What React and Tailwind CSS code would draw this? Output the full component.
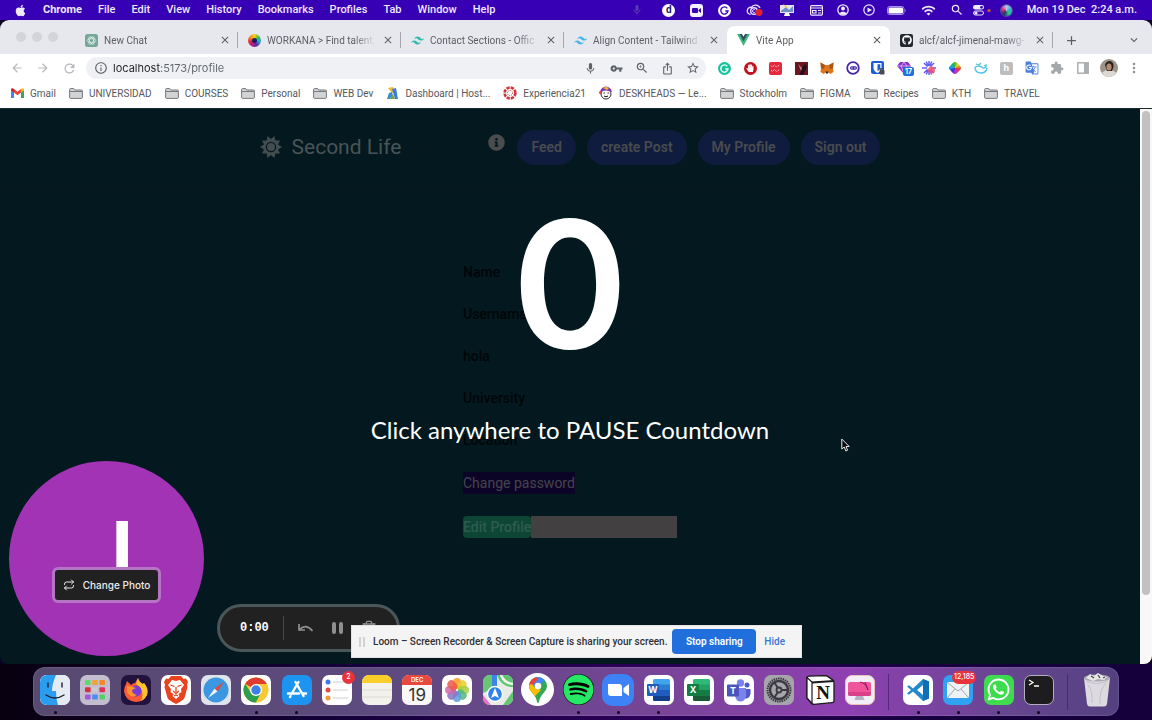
import React from "react";
import { FaApple, FaSpotify, FaWhatsapp, FaGithub, FaInfoCircle, FaHandPaper } from "react-icons/fa";
import { SiTailwindcss } from "react-icons/si";
import {
  MdMic, MdVpnKey, MdZoomIn, MdStarBorder, MdExtension, MdInfoOutline, MdRefresh, MdArrowBack,
  MdArrowForward, MdIosShare, MdClose, MdAdd, MdMoreVert, MdExpandMore, MdGTranslate, MdWifi, MdSearch,
} from "react-icons/md";
import { Repeat, Trash2 } from "lucide-react";

const menus = ["File", "Edit", "View", "History", "Bookmarks", "Profiles", "Tab", "Window", "Help"];

function MenuBar() {
  return (
    <header className="flex h-5 items-center justify-between bg-[#3700b4] font-[Roboto,sans-serif] text-[11px] text-[#efe8ff]">
      <nav className="flex items-center gap-4 pl-[14px]" aria-label="Menu bar">
        <button aria-label="Apple menu"><FaApple size={13} /></button>
        <button className="font-bold">Chrome</button>
        {menus.map((m) => <button key={m} className="font-medium">{m}</button>)}
      </nav>
      <div className="flex items-center pr-[15px]">
        <span className="flex w-8 justify-center text-[#5b3bb0]"><MdMic size={12} /></span>
        <span className="flex w-8 justify-center">
          <b className="flex size-[13px] items-center justify-center rounded-full bg-white text-[10px] leading-none text-[#24106e]">d</b>
        </span>
        <span className="flex w-6 justify-center">
          <svg width="13" height="13" viewBox="0 0 13 13"><rect width="13" height="13" rx="3" fill="#f4f0ff" /><rect x="2" y="4" width="6" height="5" rx="1" fill="#3700b4" /><path d="M8.500 6l2.500-2v5L8.500 7z" fill="#3700b4" /></svg>
        </span>
        <span className="flex w-8 justify-center"><Grammarly bg="#fff" fg="#3700b4" /></span>
        <span className="flex w-7 justify-center">
          <svg width="18" height="14" viewBox="0 0 18 14" fill="none" stroke="#e9ddff" strokeWidth="1.400"><path d="M4.500 11.500a3.600 3.600 0 1 1 .8-7.200A5 5 0 0 1 14 5" /><circle cx="8" cy="8" r="3.300" /><path d="M9.300 7.300a1.500 1.500 0 1 0 0 1.500" strokeWidth="1" /><circle cx="13" cy="9.500" r="3.500" fill="#e0202c" stroke="none" /></svg>
        </span>
        <span className="flex w-9 justify-center">
          <svg width="16" height="14" viewBox="0 0 16 14"><rect x="1" y="2" width="14" height="8" fill="#e6e2f2" /><path d="M2 8l5-4 3 3 4-4v6H2z" fill="#6a8fc8" /><path d="M4 1l5 3-2 1z" fill="#e7cf4a" /><path d="M6 10h4l1 3H5z" fill="#fff" /></svg>
        </span>
        <span className="flex w-6 justify-center">
          <svg width="13" height="11" viewBox="0 0 13 11" fill="none" stroke="#efe8ff" strokeWidth="1.200"><rect x=".6" y=".6" width="11.800" height="9.500" rx="1" /><path d="M1 3h11M2.500 5.500h3.500v2.500H2.500zM8 5.500h3M8 8h3" /></svg>
        </span>
        <span className="flex w-7 justify-center">
          <svg width="12" height="12" viewBox="0 0 12 12"><circle cx="6" cy="6" r="5.200" fill="none" stroke="#efe8ff" strokeWidth="1.300" /><circle cx="6" cy="4.600" r="2" fill="#efe8ff" /><path d="M2.500 9.500c1-2.500 6-2.500 7 0-2 1.800-5 1.800-7 0z" fill="#efe8ff" /></svg>
        </span>
        <span className="flex w-6 justify-center">
          <svg width="12" height="12" viewBox="0 0 12 12"><circle cx="6" cy="6" r="5.200" fill="none" stroke="#efe8ff" strokeWidth="1.200" /><path d="M4.500 3.500L9 6 4.500 8.500z" fill="#efe8ff" /></svg>
        </span>
        <span className="flex w-8 justify-center">
          <svg width="20" height="9" viewBox="0 0 20 9"><rect x=".5" y=".5" width="16.500" height="8" rx="2.200" fill="none" stroke="#a994e8" /><rect x="1.500" y="1.500" width="14.500" height="6" rx="1.300" fill="#fff" /><path d="M18 3v3q1.500-1.500 0-3z" fill="#a994e8" /></svg>
        </span>
        <span className="flex w-8 justify-center"><MdWifi size={15} /></span>
        <span className="flex w-6 justify-center"><MdSearch size={14} /></span>
        <span className="flex w-6 justify-center">
          <svg width="20" height="11" viewBox="0 0 20 11"><rect x="2" width="11" height="4.600" rx="2.300" fill="#efe8ff" /><circle cx="10.500" cy="2.300" r="1.400" fill="#3700b4" /><rect x="2.500" y="6" width="10" height="4" rx="2" fill="none" stroke="#efe8ff" /><circle cx="5" cy="8" r="1.600" fill="#efe8ff" /><circle cx="18" cy="5.500" r="1.600" fill="#e0562a" /></svg>
        </span>
        <span className="flex w-7 justify-center">
          <span className="size-[11px] rounded-full bg-[conic-gradient(#b9c6e8,#3fb0d8,#2ec08a,#253070,#d83c7a,#b9c6e8)] ring-1 ring-[#58459c]" />
        </span>
        <time className="pl-[6px] font-medium whitespace-pre">Mon 19 Dec  2:24 a.m.</time>
      </div>
    </header>
  );
}

function Grammarly({ bg, fg }) {
  return (
    <svg width="13" height="13" viewBox="0 0 13 13"><circle cx="6.500" cy="6.500" r="6.500" fill={bg} /><path d="M9.300 4.300A3.600 3.600 0 1 0 10 7H7.300" fill="none" stroke={fg} strokeWidth="1.400" /></svg>
  );
}

const tabs = [
  { t: "New Chat", icon: <svg width="13" height="13" viewBox="0 0 13 13"><rect width="13" height="13" rx="2.500" fill="#74a898" /><g fill="none" stroke="#dcebe6" strokeWidth=".8"><ellipse cx="6.500" cy="6.500" rx="4.200" ry="2" /><ellipse cx="6.500" cy="6.500" rx="4.200" ry="2" transform="rotate(60 6.500 6.500)" /><ellipse cx="6.500" cy="6.500" rx="4.200" ry="2" transform="rotate(120 6.500 6.500)" /></g></svg> },
  { t: "WORKANA > Find talent,", icon: <span className="flex size-[13px] items-center justify-center rounded-full bg-[conic-gradient(#f5d020,#35c04a,#2aa5e0,#5b2a9c,#b0208c,#e02a3c,#f58a1f,#f5d020)]"><span className="size-[5px] rounded-full bg-[#221a5c]" /></span> },
  { t: "Contact Sections - Offic", icon: <SiTailwindcss size={13} color="#2fb9ac" /> },
  { t: "Align Content - Tailwind", icon: <SiTailwindcss size={13} color="#46b4ea" /> },
  { t: "Vite App", active: true, icon: <svg width="13" height="12" viewBox="0 0 13 12"><path d="M0 0h13L6.500 12z" fill="#41b883" /><path d="M2.600 0h7.800L6.500 7.200z" fill="#35495e" /><path d="M4.900 0h3.200L6.500 2.800z" fill="#fff" /></svg> },
  { t: "alcf/alcf-jimenal-mawg-", icon: <span className="flex size-[13px] items-center justify-center rounded-[2px] bg-[#24292e] text-white"><FaGithub size={10} /></span> },
];

function TabStrip() {
  return (
    <div className="flex h-[34px] items-end rounded-t-[9px] bg-[#e7e8ee] font-[Roboto,sans-serif] text-[#5b5e63]">
      <div className="flex h-full w-[75px] shrink-0 items-center gap-[6px] pl-4">
        {["Close window", "Minimize", "Zoom"].map((l) => <button key={l} aria-label={l} className="size-[10px] rounded-full bg-[#d3d4d8]" />)}
      </div>
      <div className="flex min-w-0 flex-1">
        {tabs.map((b, i) => (
          <div key={b.t} className={"flex h-7 max-w-[163px] min-w-0 flex-1 items-center " + (b.active ? "rounded-t-lg bg-white" : "")}>
            <button className="flex min-w-0 flex-1 items-center gap-[6px] pl-[10px] text-[10px]">
              <span className="shrink-0">{b.icon}</span>
              <span className="flex-1 overflow-hidden text-left whitespace-nowrap [mask-image:linear-gradient(to_right,#000_80%,transparent)]">{b.t}</span>
            </button>
            <button aria-label={"Close " + b.t} className="mx-1 flex w-4 justify-center"><MdClose size={12} /></button>
            <span className={"h-4 w-px " + (i === 4 || i === 3 ? "bg-transparent" : "bg-[#a5a7ad]")} />
          </div>
        ))}
        <button aria-label="New tab" className="flex h-7 w-9 items-center justify-center"><MdAdd size={15} /></button>
      </div>
      <button aria-label="Search tabs" className="flex h-7 w-9 items-center justify-center"><MdExpandMore size={14} /></button>
    </div>
  );
}

const extensions = [
  ["Grammarly", <Grammarly bg="#15c39a" fg="#fff" />],
  ["AdBlock", <span className="flex size-[13px] items-center justify-center rounded-full bg-[#c4101f] text-white"><FaHandPaper size={8} /></span>],
  ["Checklist", <svg width="13" height="13" viewBox="0 0 13 13"><rect width="13" height="13" rx="2" fill="#e5293e" /><path d="M2 3.500l1.500 1.500 2-2 2 2 3-2M2 8l1.500 1.500 2-2 2 2 3-2" fill="none" stroke="#ffc5c8" strokeDasharray="2 1" /></svg>],
  ["Reader", <svg width="13" height="13" viewBox="0 0 13 13"><rect width="13" height="13" fill="#6b1720" /><path d="M2 2l5 4 3-4 2 3-4 8H5l1-5z" fill="#23101a" /><path d="M3 2l4 4-1 3z" fill="#c78088" /></svg>],
  ["MetaMask", <svg width="14" height="13" viewBox="0 0 14 13"><path d="M.5.500L5 3h4L13.500.500 13 6l.5 4-3 2-2-1.500h-3L3.500 12l-3-2L1 6z" fill="#e2761b" /><path d="M.5.500L5 3l-1 4-3-.5zM13.500.500L9 3l1 4 3-.5z" fill="#a8541a" /><path d="M5.500 9.500h3l-.5 2H6z" fill="#3a2a2a" /></svg>],
  ["Chat", <svg width="14" height="14" viewBox="0 0 14 14"><circle cx="7" cy="7" r="5.800" fill="#fff" stroke="#4326a8" strokeWidth="1.800" /><rect x="4" y="5.300" width="7" height="3.400" rx="1.700" fill="#4326a8" /><circle cx="6" cy="7" r=".7" fill="#fff" /><circle cx="9" cy="7" r=".7" fill="#fff" /></svg>],
  ["Bitwarden", <svg width="14" height="14" viewBox="0 0 14 14"><rect width="13" height="13" rx="2" fill="#175ddc" /><path d="M2.500 2h8v5q0 3-4 5-4-2-4-5z" fill="#fff" /><path d="M6.500 3.200h2.800v4q0 1.500-2.800 3z" fill="#175ddc" /><rect x="8.500" y="9" width="5" height="4.500" rx=".8" fill="#4b4b4b" /><path d="M9.500 9V7.500h3V9" fill="none" stroke="#4b4b4b" /></svg>],
  ["Gem", <span className="relative flex"><svg width="14" height="12" viewBox="0 0 14 12"><path d="M3 0h8l3 4-7 8-7-8z" fill="#8a32c8" /><path d="M0 4h14M4 4l3 7 3-7-3-4z" fill="none" stroke="#e3c2f6" strokeWidth=".8" /></svg><span className="absolute top-[5px] left-[6px] rounded-[2px] bg-[#1a73d8] px-[2px] text-[7px] leading-[9px] font-bold text-white">17</span></span>],
  ["Loom", <svg width="14" height="14" viewBox="0 0 14 14"><g stroke="#625df5" strokeWidth="1.500"><path d="M7 0v14M0 7h14M2 2l10 10M12 2L2 12M4.300.500l5.400 13M9.700.500l-5.400 13" /></g><circle cx="7" cy="7" r="2" fill="#fff" /><circle cx="9.500" cy="9" r="3.500" fill="#f0506e" opacity=".85" /></svg>],
  ["Color picker", <span className="size-[10px] rotate-45 rounded-[3px] bg-[conic-gradient(#e8d820,#e83030,#d030c8,#3030e0,#18a8e0,#20b838,#e8d820)]" />],
  ["Whale", <svg width="14" height="14" viewBox="0 0 14 14" fill="none" stroke="#4cc1e8" strokeWidth="1.300"><path d="M1 6q5-2 8 1 4 0 3-3l-2 1M1 6q0 6 6 6 5 0 6-5M2 3l3 1 2-2" /></svg>],
  ["Honey", <span className="flex size-[13px] items-center justify-center rounded-[2px] bg-[#bdbdbd] text-[9px] font-bold text-white">h</span>],
  ["Translate", <MdGTranslate size={14} color="#4a80dc" />],
  ["Extensions", <MdExtension size={14} color="#a5a8ab" />],
  ["Side panel", <svg width="12" height="12" viewBox="0 0 12 12"><rect x=".8" y=".8" width="10.400" height="10.400" fill="none" stroke="#adb0b3" strokeWidth="1.500" /><path d="M7 1h4v10H7z" fill="#adb0b3" /></svg>],
  ["Account", <svg width="18" height="18" viewBox="0 0 18 18"><circle cx="9" cy="9" r="9" fill="#9c9389" /><path d="M2 14q2-3 7-3t7 3q-3 4-7 4t-7-4z" fill="#ddd8d4" /><path d="M5 6q1-4 5-4 4 1 3.500 6L12 12H7z" fill="#2a211d" /><ellipse cx="9" cy="8" rx="2.600" ry="3.500" fill="#b58a73" /></svg>],
  ["More", <MdMoreVert size={16} color="#909397" />],
];

function Toolbar() {
  return (
    <div className="flex h-7 items-center bg-white text-[#5f6368]">
      <div className="grid w-[82px] grid-cols-3 justify-items-center pl-1 text-[#b7b9bc]">
        <button aria-label="Back"><MdArrowBack size={14} /></button>
        <button aria-label="Forward"><MdArrowForward size={14} /></button>
        <button aria-label="Reload"><MdRefresh size={15} /></button>
      </div>
      <form className="ml-1 flex h-[22px] min-w-0 flex-1 items-center rounded-full bg-[#f0f1f5] pl-2">
        <MdInfoOutline size={14} className="shrink-0" />
        <input aria-label="Address" defaultValue="localhost:5173/profile" className="ml-[5px] w-0 min-w-0 flex-1 bg-[linear-gradient(to_right,#202124_48px,#5f6368_48px)] bg-clip-text text-[11px] text-transparent outline-none" />
        <div className="grid w-32 grid-cols-5 justify-items-center">
          <button type="button" aria-label="Voice search"><MdMic size={13} /></button>
          <button type="button" aria-label="Passwords"><MdVpnKey size={13} /></button>
          <button type="button" aria-label="Zoom"><MdZoomIn size={14} /></button>
          <button type="button" aria-label="Share"><MdIosShare size={13} /></button>
          <button type="button" aria-label="Bookmark"><MdStarBorder size={14} /></button>
        </div>
      </form>
      <div className="ml-[6px] grid w-[440px] grid-cols-17 items-center justify-items-center pr-[5px]">
        {extensions.map(([n, icon]) => <button key={n} aria-label={n} className="flex">{icon}</button>)}
      </div>
    </div>
  );
}

const Folder = () => (
  <svg width="14" height="11" viewBox="0 0 14 11"><path d="M.6 1.600q0-1 1-1h3.200l1.200 1.400h6.400q1 0 1 1V9.400q0 1-1 1H1.600q-1 0-1-1z" fill="#d2d3d5" stroke="#77797c" /><path d="M1 3.500h12" stroke="#77797c" /></svg>
);
const Gmail = () => (
  <svg width="13" height="10" viewBox="0 0 13 10"><path d="M0 1.500V10h3V4z" fill="#4285f4" /><path d="M13 1.500V10h-3V4z" fill="#34a853" /><path d="M3 1l3.500 2.800L10 1v3.500L6.500 7.300 3 4.500z" fill="#ea4335" /><path d="M0 1.500Q.5-.8 3 1v3.500L0 2.500z" fill="#c5221f" /><path d="M13 1.500Q12.500-.8 10 1v3.500l3-2z" fill="#fbbc04" /></svg>
);
const bookmarks = [
  ["Gmail", <Gmail />], ["UNIVERSIDAD"], ["COURSES"], ["Personal"], ["WEB Dev"],
  ["Dashboard | Host...", <svg width="13" height="13" viewBox="0 0 13 13"><path d="M2 1l5-1 2 5-3 1z" fill="#f3b52c" /><path d="M6 2l4-1 2 11H9z" fill="#3b7dd8" /><path d="M1 12l2-6 3-1 1 4-3 3z" fill="#3b8bd0" /><path d="M4 12l3-5 2 5z" fill="#79a63d" /></svg>],
  ["Experiencia21", <svg width="14" height="14" viewBox="0 0 14 14"><circle cx="7" cy="7" r="5.400" fill="none" stroke="#d0343a" strokeWidth="2.600" strokeDasharray="3.240 1" /><circle cx="7" cy="7" r="2.600" fill="none" stroke="#d0343a" strokeDasharray="1 1.040" /></svg>],
  ["DESKHEADS — Le...", <svg width="14" height="14" viewBox="0 0 14 14"><circle cx="7" cy="8" r="5" fill="#fff" stroke="#332a2a" /><path d="M1 6q1-5 6-5.500Q12 1 13 6 7 3 1 6z" fill="#7b38b4" /><path d="M4 2q3-2 6 0L8 4z" fill="#f0b52a" /><path d="M4.500 7h1.500M8.500 7H10M5 10q2 1.500 4 0" stroke="#222" /><circle cx="1.500" cy="6.500" r="1.500" fill="#e33a44" /></svg>],
  ["Stockholm"], ["FIGMA"], ["Recipes"], ["KTH"], ["TRAVEL"],
];

function Bookmarks() {
  return (
    <nav aria-label="Bookmarks" className="flex h-[26px] items-center gap-[13px] overflow-hidden bg-white pb-1 pl-[11px] font-[Roboto,sans-serif] text-[10px] text-[#55585c]">
      {bookmarks.map(([n, icon]) => (
        <a key={n} href="#" className="flex shrink-0 items-center gap-[6px] whitespace-nowrap">{icon || <Folder />}{n}</a>
      ))}
    </nav>
  );
}

function SunIcon() {
  return (
    <svg width="22" height="22" viewBox="0 0 22 22"><path d="M11 3l3.500-3 .8 4.600L20 4.500 18 8.600l4 2.400-4 2.400 2 4.100-4.700-.1-.8 4.600L11 19l-3.500 3-.8-4.600L2 17.500l2-4.100L0 11l4-2.400-2-4.100 4.700.1L7.500 0z" fill="#434d50" /><circle cx="11" cy="11" r="4.600" fill="none" stroke="#07191e" strokeWidth="1.300" /></svg>
  );
}

function ProfilePage() {
  return (
    <div className="font-[Roboto,sans-serif] text-sm">
      <div className="flex h-[77px] items-center justify-center border-b border-[#03161b]">
        <SunIcon />
        <h1 className="ml-[10px] text-[21px] text-[#4a5456]">Second Life</h1>
        <FaInfoCircle size={17} className="mr-3 mb-[10px] ml-[87px] text-[#4b4c4d]" />
        <div className="flex gap-[11px] font-semibold text-[#484b4f]">
          {["Feed", "create Post", "My Profile", "Sign out"].map((l) => (
            <button key={l} className="h-[35px] rounded-full bg-[#101c3d] px-[14px] whitespace-nowrap">{l}</button>
          ))}
        </div>
      </div>
      <div className="mx-auto mt-[76px] flex w-[214px] flex-col items-start gap-[22px] font-medium text-[#000608]">
        {["Name", "Username", "hola", "University", "Location"].map((l) => <p key={l} className="leading-5">{l}</p>)}
        <button className="bg-[#0c0426] leading-[22px] font-normal text-[#45444f]">Change password</button>
        <div className="flex w-full">
          <button className="shrink-0 rounded bg-[#0d4635] leading-[22px] text-[#2f5b4f]">Edit Profile</button>
          <input aria-label="Profile value" className="h-[22px] min-w-0 flex-1 bg-[#424041]" />
        </div>
      </div>
    </div>
  );
}

function Recorder() {
  return (
    <>
      <div className="absolute bottom-2 left-[9px] flex size-[195px] items-center justify-center rounded-full bg-[#a233b5]">
        <span className="text-[104px] leading-none font-medium text-white">J</span>
        <button className="absolute top-[106px] flex h-9 items-center gap-2 rounded-md border-[3px] border-[#b674c4] bg-[#212121] px-2 text-[10px] font-medium whitespace-nowrap text-[#ececec]">
          <Repeat size={12} />Change Photo
        </button>
      </div>
      <div className="absolute bottom-3 left-[217px] flex h-12 w-[183px] items-center rounded-full border-[3px] border-[#4b5658] bg-[#212121] pl-5 text-[#8f8f91]">
        <span className="font-['Liberation_Mono',monospace] text-xs font-bold text-white">0:00</span>
        <span className="mx-[14px] h-6 w-px bg-[#48484a]" />
        <button aria-label="Restart" className="mr-[18px]"><svg width="16" height="11" viewBox="0 0 16 11" fill="none" stroke="currentColor" strokeWidth="1.700"><path d="M1 1v6h6M1.500 6.500Q8 0 14.500 8" /></svg></button>
        <button aria-label="Pause" className="mr-[18px] flex gap-[3px]"><span className="h-3 w-1 rounded-sm bg-[#8f8f91]" /><span className="h-3 w-1 rounded-sm bg-[#8f8f91]" /></button>
        <button aria-label="Delete"><Trash2 size={16} /></button>
      </div>
      <div className="absolute bottom-[6px] left-[351px] flex h-[33px] w-[451px] items-center border border-[#e3e3e3] bg-[#f4f4f5] pr-2 pl-[7px] font-[Roboto,sans-serif] text-[10px] text-[#303134]">
        <span className="mr-2 flex gap-[2px]"><span className="h-[10px] w-[2px] bg-[#d2d2d4]" /><span className="h-[10px] w-[2px] bg-[#d2d2d4]" /></span>
        <p className="flex-1 font-medium whitespace-nowrap">Loom – Screen Recorder &amp; Screen Capture is sharing your screen.</p>
        <button className="h-[25px] w-[84px] rounded bg-[#206fdc] font-semibold text-white">Stop sharing</button>
        <button className="mx-2 font-medium text-[#3a76d2]">Hide</button>
      </div>
    </>
  );
}

const Tile = ({ className = "bg-white", children }) => (
  <span className={"flex size-[30px] items-center justify-center overflow-hidden rounded-[7px] " + className}>{children}</span>
);
const Office = ({ l, a, b, c, d }) => (
  <Tile><svg width="24" height="22" viewBox="0 0 24 22"><rect x="6" width="17" height="22" rx="1.500" fill={a} /><path d="M6 5.500h17V11H6z" fill={b} /><path d="M6 11h17v5.500H6z" fill={c} /><path d="M6 16.500h17v4q0 1.500-1.500 1.500h-14Q6 22 6 20.500z" fill={d} /><rect y="5" width="12" height="12" rx="1" fill={c} /><text x="6" y="14" fontSize="9" fontWeight="700" textAnchor="middle" fill="#fff">{l}</text></svg></Tile>
);
const petals = [["#f59a23", 0], ["#e8cf2c", 45], ["#a5cf3c", 90], ["#50b878", 135], ["#5a9fd8", 180], ["#8a72c8", 225], ["#d06aa8", 270], ["#ee5a48", 315]];

const apps = [
  { n: "Finder", run: true, icon: <Tile><svg width="30" height="30" viewBox="0 0 30 30"><path d="M0 0h30v30H0z" fill="#e4ebf3" /><path d="M0 0h16q-4 9-4 16h4q0 8 2 14H0z" fill="#2b9df0" /><path d="M8 8v4M22 8v4M6 20q9 6 18 0" stroke="#223" strokeWidth="1.400" fill="none" strokeLinecap="round" /></svg></Tile> },
  { n: "Launchpad", icon: <Tile className="bg-[#c3bdd0]"><svg width="20" height="20" viewBox="0 0 20 20">{["#62d86a", "#f5a13a", "#f08a28", "#d8303e", "#c9c9cf", "#e02f58", "#a356e0", "#4a8cf0", "#52cf68"].map((c, i) => <rect key={i} x={(i % 3) * 7.200} y={Math.floor(i / 3) * 7.200} width="5.600" height="5" rx="1" fill={c} />)}</svg></Tile> },
  { n: "Firefox", icon: <Tile className="bg-[#21123f]"><svg width="26" height="26" viewBox="0 0 26 26"><path d="M3 7l1-3 4 4q2-2 4-2l3-5q1 4 5 6l1-1q5 6 3 12-3 7-11 7Q2 24 1 14q0-4 2-7z" fill="#fb5a35" /><path d="M15 1q1 4 5 6l1-1q5 6 3 12-2 4-6 6 3-6 0-12-1-3-5-5z" fill="#fdc32e" /><circle cx="13" cy="14" r="5.500" fill="#7a3bd6" /><path d="M4 9q4 0 6 1l3 1-4 2q0 4 5 5-6 4-10-3z" fill="#ff9330" /></svg></Tile> },
  { n: "Brave", icon: <Tile><svg width="26" height="28" viewBox="0 0 26 28"><path d="M8 0h10l2.500 3L23 2.500 25 6l-1 3 .5 2-3 11q-1 2-8.500 6-7.500-4-8.500-6l-3-11L2 9 1 6l2-3.500L5.500 3z" fill="#e8431f" /><path d="M13 5l4-1 4 5-3 4 .5 3-3 2 1 2-3.500 3-3.500-3 1-2-3-2 .5-3-3-4 4-5z" fill="#fff" /><path d="M7.500 9l4 1.500M18.500 9l-4 1.500M13 11v5M10 15l3 2.500L16 15M11 20l2-1 2 1" stroke="#e8431f" strokeWidth="1.300" fill="none" /></svg></Tile> },
  { n: "Safari", icon: <Tile className="bg-[#dfe3ea]"><svg width="26" height="26" viewBox="0 0 26 26"><circle cx="13" cy="13" r="12.500" fill="#3a97e0" /><path d="M21 5l-6.500 9.500-3-3z" fill="#e3473d" /><path d="M5 21l6.500-9.500 3 3z" fill="#eef2f5" /></svg></Tile> },
  { n: "Chrome", run: true, icon: <Tile><svg width="26" height="26" viewBox="0 0 26 26"><circle cx="13" cy="13" r="12.500" fill="#f8c934" /><path d="M13 13L2.200 6.700A12.500 12.500 0 0 1 23.800 6.700z" fill="#df3b30" /><path d="M2.200 6.700A12.500 12.500 0 0 0 13 25.500L18 16 8 16z" fill="#2f9e4e" /><path d="M13 7h10.900q3 6.500-.5 12-4 6.500-10.400 6.500L18 16z" fill="#f8c934" /><circle cx="13" cy="13" r="6" fill="#fff" /><circle cx="13" cy="13" r="4.700" fill="#3c7eea" /></svg></Tile> },
  { n: "App Store", run: true, icon: <Tile className="bg-[#1d94ef] text-white"><svg width="24" height="24" viewBox="0 0 24 24" stroke="#fff" strokeWidth="2.400" strokeLinecap="round"><path d="M13.500 4L6.500 16M10.500 4l8 14M3 15.500h11M18 15.500h3M5 19l.5-.8" /></svg></Tile> },
  { n: "Reminders", badge: "2", icon: <Tile><svg width="30" height="30" viewBox="0 0 30 30"><circle cx="6" cy="7" r="2.500" fill="#3d78e8" /><circle cx="6" cy="15" r="2.500" fill="#e04b40" /><circle cx="6" cy="23" r="2.500" fill="#f09a37" /><path d="M11 7h15M11 15h15M11 23h15" stroke="#cfcfd2" /></svg></Tile> },
  { n: "Notes", icon: <Tile className="bg-[#f3f1ec]"><svg width="30" height="30" viewBox="0 0 30 30"><path d="M0 0h30v8H0z" fill="#f9ce2b" /><path d="M0 15h30M0 22h30" stroke="#dedbd4" /></svg></Tile> },
  { n: "Calendar", icon: <Tile className="flex-col bg-[#faf8f6]"><span className="w-full bg-[#e8483f] text-center text-[6px] leading-[10px] font-semibold text-white">DEC</span><span className="text-[17px] leading-5 text-[#333]">19</span></Tile> },
  { n: "Photos", icon: <Tile><svg width="26" height="26" viewBox="0 0 26 26">{petals.map(([c, r]) => <rect key={r} x="9" y="1" width="8" height="11" rx="4" fill={c} opacity=".85" transform={`rotate(${r} 13 13)`} />)}</svg></Tile> },
  { n: "Maps", icon: <Tile className="bg-[#e8ebe5]"><svg width="30" height="30" viewBox="0 0 30 30"><path d="M0 0h10v14L0 18z" fill="#67c775" /><path d="M14 0h16v12Q18 12 14 0z" fill="#5cc66c" /><path d="M18 0q3 8 12 9" stroke="#f2f4f2" strokeWidth="2.500" fill="none" /><path d="M20 30l10-14v14z" fill="#63c673" /><path d="M0 20l8 10H0z" fill="#e673c6" /><path d="M9 0h5v14H9z" fill="#3a86ea" /><circle cx="12" cy="19" r="7.500" fill="#2f83ea" stroke="#fff" strokeWidth="1.300" /><path d="M12 13l4 10-4-2-4 2z" fill="#fff" /></svg></Tile> },
  { n: "Google Maps", icon: <span className="flex size-[33px] items-center justify-center rounded-full bg-white"><svg width="18" height="26" viewBox="0 0 18 26"><defs><clipPath id="pin"><path d="M9 0a9 9 0 0 1 9 9c0 6-7 8-8 16q-1 2-2 0C7 17 0 15 0 9a9 9 0 0 1 9-9z" /></clipPath></defs><g clipPath="url(#pin)"><path d="M0 0h18v26H0z" fill="#34a853" /><path d="M0 4l7 6 11-8V0H0z" fill="#4285f4" /><path d="M0 3l6-5 3 4-8 9z" fill="#ea4335" /><path d="M0 8l3-1 3 4 6 2-8 8H0z" fill="#fbbc04" /></g><circle cx="9" cy="9" r="3.300" fill="#fff" /></svg></span> },
  { n: "Spotify", run: true, icon: <span className="flex rounded-full bg-black text-[#25e865]"><FaSpotify size={31} /></span> },
  { n: "Zoom", run: true, icon: <span className="flex size-8 items-center justify-center rounded-[10px] bg-[#3d82f6]"><svg width="21" height="12" viewBox="0 0 21 12" fill="#fff"><path d="M0 0h11q3 0 3 3v9H3q-3 0-3-3zM15.500 4L21 0v12l-5.500-4z" /></svg></span> },
  { n: "Word", run: true, icon: <Office l="W" a="#41a5ee" b="#2b7cd3" c="#1f5cbd" d="#123f8c" /> },
  { n: "Excel", icon: <Office l="X" a="#2fb878" b="#23a063" c="#137c42" d="#185c37" /> },
  { n: "Teams", icon: <Tile><svg width="24" height="24" viewBox="0 0 24 24"><circle cx="20" cy="7" r="2.500" fill="#5059c9" /><path d="M17 11h6.500v5q-1 4-4 4.500H17z" fill="#5059c9" /><circle cx="13.500" cy="5" r="3.700" fill="#7b83eb" /><path d="M8 10h11v8q-1 5.500-5.500 5.500T8 18z" fill="#7b83eb" /><rect y="6.500" width="12" height="12" rx="1" fill="#4b53bc" /><text x="6" y="16" fontSize="9" fontWeight="700" textAnchor="middle" fill="#fff">T</text></svg></Tile> },
  { n: "System Settings", icon: <Tile className="bg-[#a6a5ab]"><svg width="26" height="26" viewBox="0 0 26 26" fill="none" stroke="#3a3a3f"><circle cx="13" cy="13" r="11.500" strokeWidth="2" strokeDasharray="1.500 .8" /><circle cx="13" cy="13" r="9" strokeWidth="2.500" /><circle cx="13" cy="13" r="2.500" strokeWidth="1.800" /><path d="M15 13h7M12 15l-4 6M12 11L8 5" strokeWidth="2" /></svg></Tile> },
  { n: "Notion", icon: <svg width="30" height="30" viewBox="0 0 30 30"><path d="M2 2.500Q2 1.500 4 1.200L20 .6q1.500 0 3 1l5 3.500q1 1 1 2.500V26q0 1.500-2 1.700L9 29.300q-1.500 0-2.500-1L2 23z" fill="#fff" stroke="#1a1a1a" strokeWidth="1.300" strokeLinejoin="round" /><path d="M2 2.500l5 4.500v21.500L2 23z" fill="#fff" stroke="#1a1a1a" strokeWidth="1.200" /><path d="M7 7.500L29 6" stroke="#1a1a1a" strokeWidth="2" /><text x="18" y="24" fontSize="19" fontWeight="700" fontFamily="Liberation Serif, serif" textAnchor="middle" fill="#111">N</text></svg> },
  { n: "CleanMyMac", icon: <Tile className="border border-[#e8c3b4] bg-[#f1eef8]"><svg width="27" height="26" viewBox="0 0 27 26"><path d="M10 19h7l1.500 4h-10z" fill="#b7b2c6" /><rect x="2" y="5" width="23" height="14" rx="2" fill="#f0559c" /><path d="M2 15h23v2q0 2-2 2H4q-2 0-2-2z" fill="#d9418a" /><path d="M14 5q6 1 8 8M19 5l3 8" stroke="#8a1c5c" fill="none" /></svg></Tile> },
  null,
  { n: "VS Code", run: true, icon: <Tile><svg width="23" height="22" viewBox="0 0 23 22"><path d="M16 0l6 2.500v17L16 22 6 12.600 2 15.700 0 14.600 4 11 0 7.400l2-1.100 4 3.100zM16 6l-6 5 6 5z" fill="#2489ca" fillRule="evenodd" /><path d="M16 0l6 2.500v17L16 22z" fill="#1070b3" /></svg></Tile> },
  { n: "Mail", run: true, badge: "12,185", icon: <Tile className="bg-[#2fa3f2]"><svg width="22" height="16" viewBox="0 0 22 16"><rect width="22" height="16" rx="2" fill="#eef2f5" /><path d="M1 1l10 8L21 1M1 15l7-8M21 15l-7-8" fill="none" stroke="#9aa7b2" /></svg></Tile> },
  { n: "WhatsApp", run: true, icon: <Tile className="bg-[#3ddb4d] text-white"><FaWhatsapp size={25} /></Tile> },
  { n: "Terminal", run: true, icon: <Tile className="items-start justify-start border border-[#b3b0b9] bg-[#1d1d1f]"><svg width="27" height="27" viewBox="0 0 27 27"><path d="M4 4l4 2.500L4 9M9 10h5" stroke="#fff" strokeWidth="1.300" fill="none" /></svg></Tile> },
  null,
  { n: "Trash", icon: <svg width="28" height="34" viewBox="0 0 28 34"><path d="M1 5h26l-3 26q-.5 2.500-3 2.500H7Q4.500 33.500 4 31z" fill="#dcdadf" /><path d="M5 12q5 6 4 18M23 10q-7 7-6 21M3 8q10 5 22 0" stroke="#c4c2c9" fill="none" /><ellipse cx="14" cy="5" rx="13" ry="3.500" fill="#a9a8b0" /><path d="M3 5l4-4 4 2 4-3 5 3 4 1-3 3-6-1-5 2z" fill="#e7e7ea" /><path d="M8 3l3 2M15 2l2 3M20 5l2-1" stroke="#44444c" strokeWidth="1.300" /></svg> },
];

function Dock() {
  return (
    <footer className="bg-[linear-gradient(to_right,#07000f,#15003a_30%,#2a0058_55%,#15003c_85%)] pt-[3px] pb-1">
      <nav aria-label="Dock" className="mx-[33px] flex h-[49px] items-center rounded-xl bg-[linear-gradient(to_right,#574a70,#5e4a80_35%,#7a449a_60%,#8f40b2_75%,#664690_90%,#544080)] px-[2px] ring-1 ring-white/10 ring-inset">
        {apps.map((a, i) => a ? (
          <div key={a.n} className="relative flex h-full min-w-0 flex-1 items-center justify-center pb-1">
            <button aria-label={a.n} className="shrink-0">{a.icon}</button>
            {a.badge && <span className="absolute top-1 right-[2px] flex h-[13px] min-w-[13px] items-center justify-center rounded-full bg-[#e8323c] px-[2px] text-[7px] font-medium text-white">{a.badge}</span>}
            {a.run && <span className="absolute bottom-[2px] size-[3px] rounded-full bg-[#10041c]" />}
          </div>
        ) : (
          <span key={i} className="flex w-[18px] justify-center"><span className="h-9 w-px bg-[#3f2068]/70" /></span>
        ))}
      </nav>
    </footer>
  );
}

export default function App() {
  return (
    <div className="flex min-h-screen flex-col bg-[#0d0025] font-[Inter,sans-serif]">
      <MenuBar />
      <TabStrip />
      <Toolbar />
      <Bookmarks />
      <main className="relative flex min-h-[555px] flex-1 overflow-hidden rounded-b-lg border-t border-[#1b2a2e] bg-[#03191f]">
        <div className="min-w-0 flex-1"><ProfilePage /></div>
        <div className="w-3 bg-[#f8f8f8] px-[2px] pt-[2px]"><div className="h-[484px] rounded-full bg-[#c1c1c1]" /></div>
        <button className="absolute inset-y-0 right-3 left-0 flex flex-col items-center pt-[87px] text-white">
          <span className="text-[176px] leading-[176px] font-semibold">0</span>
          <span className="mt-10 font-[Lato,sans-serif] text-2xl leading-9">Click anywhere to PAUSE Countdown</span>
        </button>
        <svg className="absolute top-[329px] left-[841px]" width="9" height="14" viewBox="0 0 9 14"><path d="M.8 1v10l2.400-2 1.600 4 1.800-.8L5 8.500h3.200z" fill="#0a0a0a" stroke="#e8e8e8" /></svg>
        <Recorder />
      </main>
      <Dock />
    </div>
  );
}
